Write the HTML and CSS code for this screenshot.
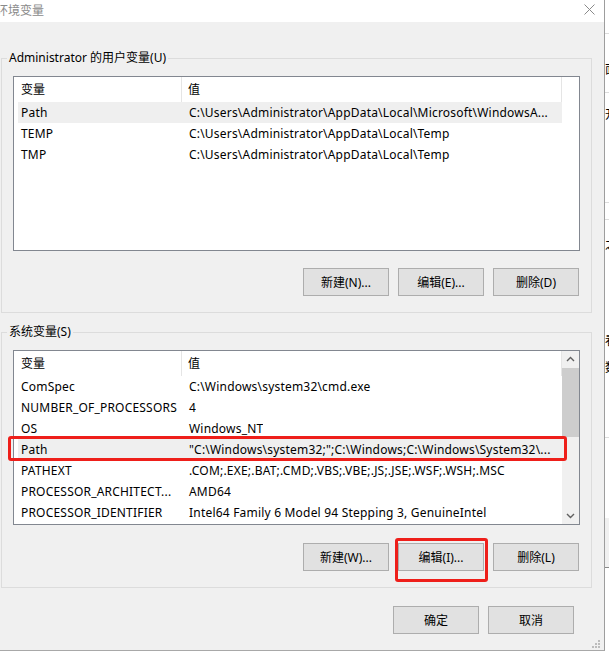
FILE: index.html
```html
<!DOCTYPE html>
<html lang="zh-CN">
<head>
<meta charset="utf-8">
<title>环境变量</title>
<link rel="stylesheet" href="styles.css">
</head>
<body>
<div class="desk">
  <div class="dialog">
    <div class="titlebar">
      <span class="title">环境变量</span>
      <svg class="close" viewBox="0 0 11 11" width="11" height="11"><path d="M0.5 0.5 L10.5 10.5 M10.5 0.5 L0.5 10.5" stroke="#8a8a8a" stroke-width="1" fill="none"/></svg>
    </div>
    <div class="body">
      <fieldset class="group g1">
        <legend>Administrator 的用户变量(U)</legend>
        <div class="list">
          <div class="lmain">
            <div class="lhead"><div class="c1">变量</div><div class="c2">值</div></div>
            <div class="row sel"><span class="c1">Path</span><span class="c2">C:\Users\Administrator\AppData\Local\Microsoft\WindowsA...</span></div>
            <div class="row"><span class="c1">TEMP</span><span class="c2">C:\Users\Administrator\AppData\Local\Temp</span></div>
            <div class="row"><span class="c1">TMP</span><span class="c2">C:\Users\Administrator\AppData\Local\Temp</span></div>
          </div>
          <div class="sb sb-empty"></div>
        </div>
        <div class="btns">
          <button class="btn">新建(N)...</button>
          <button class="btn">编辑(E)...</button>
          <button class="btn">删除(D)</button>
        </div>
      </fieldset>

      <fieldset class="group g2">
        <legend>系统变量(S)</legend>
        <div class="list">
          <div class="lmain">
            <div class="lhead"><div class="c1">变量</div><div class="c2">值</div></div>
            <div class="row"><span class="c1">ComSpec</span><span class="c2">C:\Windows\system32\cmd.exe</span></div>
            <div class="row"><span class="c1">NUMBER_OF_PROCESSORS</span><span class="c2">4</span></div>
            <div class="row"><span class="c1">OS</span><span class="c2">Windows_NT</span></div>
            <div class="row sel"><span class="c1">Path</span><span class="c2">"C:\Windows\system32;";C:\Windows;C:\Windows\System32\...</span><span class="mark mark-row"></span></div>
            <div class="row"><span class="c1">PATHEXT</span><span class="c2">.COM;.EXE;.BAT;.CMD;.VBS;.VBE;.JS;.JSE;.WSF;.WSH;.MSC</span></div>
            <div class="row"><span class="c1">PROCESSOR_ARCHITECT...</span><span class="c2">AMD64</span></div>
            <div class="row"><span class="c1">PROCESSOR_IDENTIFIER</span><span class="c2">Intel64 Family 6 Model 94 Stepping 3, GenuineIntel</span></div>
          </div>
          <div class="sb">
            <div class="sb-arrow"><svg viewBox="0 0 17 17" width="17" height="17"><path d="M5 10 L8.5 6.5 L12 10" stroke="#606060" stroke-width="1.4" fill="none"/></svg></div>
            <div class="sb-thumb"></div>
            <div class="sb-track"></div>
            <div class="sb-arrow"><svg viewBox="0 0 17 17" width="17" height="17"><path d="M5 7 L8.5 10.5 L12 7" stroke="#606060" stroke-width="1.4" fill="none"/></svg></div>
          </div>
        </div>
        <div class="btns btns2">
          <button class="btn">新建(W)...</button>
          <button class="btn">编辑(I)...<span class="mark mark-btn"></span></button>
          <button class="btn">删除(L)</button>
        </div>
      </fieldset>

      <div class="footer">
        <button class="btn">确定</button>
        <button class="btn">取消</button>
      </div>
    </div>
    <svg class="grip" viewBox="0 0 8 8" width="8" height="8">
      <rect x="6" y="0" width="2" height="2" fill="#bcbcbc"/>
      <rect x="3" y="3" width="2" height="2" fill="#bcbcbc"/>
      <rect x="6" y="3" width="2" height="2" fill="#bcbcbc"/>
      <rect x="0" y="6" width="2" height="2" fill="#bcbcbc"/>
      <rect x="3" y="6" width="2" height="2" fill="#bcbcbc"/>
      <rect x="6" y="6" width="2" height="2" fill="#bcbcbc"/>
    </svg>
  </div>
  <div class="behind">
    <div class="bh-top"></div>
    <div class="bh-line l1"></div>
    <div class="bh-glyph g-a">面</div>
    <div class="bh-line l2"></div>
    <div class="bh-glyph g-b">开</div>
    <div class="bh-line l3"></div>
    <div class="bh-line l4"></div>
    <div class="bh-glyph g-c">之</div>
    <div class="bh-glyph g-d">看</div>
    <div class="bh-glyph g-e">数</div>
    <div class="bh-line l5"></div>
    <div class="bh-block"></div>
  </div>
</div>
</body>
</html>
```

FILE: styles.css
```css
* { box-sizing: border-box; }
html, body { margin: 0; padding: 0; }
body {
  width: 609px;
  height: 653px;
  overflow: hidden;
  background: #fff;
  font-family: "Noto Sans", "Noto Sans CJK SC", sans-serif;
  font-size: 12px;
  color: #000;
}
.desk { display: flex; align-items: flex-start; height: 653px; }

.dialog {
  width: 605px;
  height: 651px;
  flex: none;
  background: #f0f0f0;
  border-right: 1px solid #9d9d9d;
  border-bottom: 1px solid #a8a8a8;
  position: relative;
  display: flex;
  flex-direction: column;
}
.titlebar {
  height: 22px;
  background: #fff;
  display: flex;
  align-items: center;
  justify-content: space-between;
  padding-right: 9px;
}
.title { margin-left: -4px; color: #8a8a8a; line-height: 16px; }
.close { display: block; margin-top: -3px; }

.body { padding-left: 1px; }

.group {
  margin: 28px 0 0 0;
  width: 591px;
  min-width: 0;
  border: 1px solid #dcdcdc;
  padding: 10px 11px 16px 11px;
}
.g2 { margin-top: 11px; padding-top: 10px; }
.group legend {
  padding: 0 2px;
  margin-left: -6px;
  line-height: 16px;
  font-size: 12px;
}

.list {
  height: 175px;
  border: 1px solid #828790;
  background: #fff;
  display: flex;
  position: relative;
}
.lmain { width: 548px; flex: none; }
.lhead { display: flex; height: 25px; line-height: 25px; }
.lhead .c1 { width: 168px; padding-left: 7px; border-right: 1px solid #e5e5e5; }
.lhead .c2 { flex: 1; padding-left: 6px; border-right: 1px solid #e5e5e5; }

.row {
  display: flex;
  height: 21px;
  line-height: 21px;
  margin-left: 4px;
  white-space: nowrap;
  position: relative;
  letter-spacing: 0.2px;
}
.row .c1 { width: 164px; flex: none; padding-left: 3px; overflow: hidden; }
.row .c2 { padding-left: 7px; overflow: hidden; }
.row.sel { background: #efefef; }

.sb { width: 17px; flex: none; background: #f0f0f0; display: flex; flex-direction: column; }
.sb-empty { background: #fff; }
.sb-arrow { height: 17px; }
.sb-arrow svg { display: block; }
.sb-thumb { height: 69px; background: #cdcdcd; }
.sb-track { flex: 1; }

.btns {
  display: flex;
  justify-content: flex-end;
  gap: 9px;
  margin-top: 17px;
  padding-right: 1px;
}
.btns2 { margin-top: 18px; }
.footer {
  display: flex;
  justify-content: flex-end;
  gap: 9px;
  margin-top: 18px;
  padding-right: 30px;
}
.btn {
  width: 86px;
  height: 28px;
  background: #e1e1e1;
  border: 1px solid #adadad;
  font: inherit;
  color: #000;
  padding: 0;
  position: relative;
}

.mark {
  position: absolute;
  border: 3px solid #ee1f1a;
  border-radius: 3px;
  pointer-events: none;
}
.mark-row { left: -10px; top: -3px; width: 559px; height: 25px; }
.mark-btn { left: -4px; top: -6px; width: 93px; height: 44px; }

.grip { position: absolute; right: 4px; bottom: 2px; }

.behind {
  width: 4px;
  height: 653px;
  flex: none;
  overflow: hidden;
  background: #fff;
  display: flex;
  flex-direction: column;
}
.bh-top { height: 33px; background: #fff; }
.bh-line { height: 1px; background: #dcdcdc; flex: none; }
.bh-glyph { height: 16px; line-height: 16px; flex: none; white-space: nowrap; font-size: 12px; color: #000; }
.g-a { margin-top: 28px; }
.l2 { margin-top: 14px; }
.g-b { margin-top: 14px; }
.l3 { margin-top: 79px; }
.l4 { margin-top: 16px; }
.g-c { margin-top: 17px; }
.g-d { margin-top: 80px; }
.g-e { margin-top: 11px; }
.l5 { margin-top: 61px; }
.bh-block { margin-top: 80px; height: 50px; background: #f0f0f0; border-bottom: 1px solid #8a8a8a; flex: none; }
```
